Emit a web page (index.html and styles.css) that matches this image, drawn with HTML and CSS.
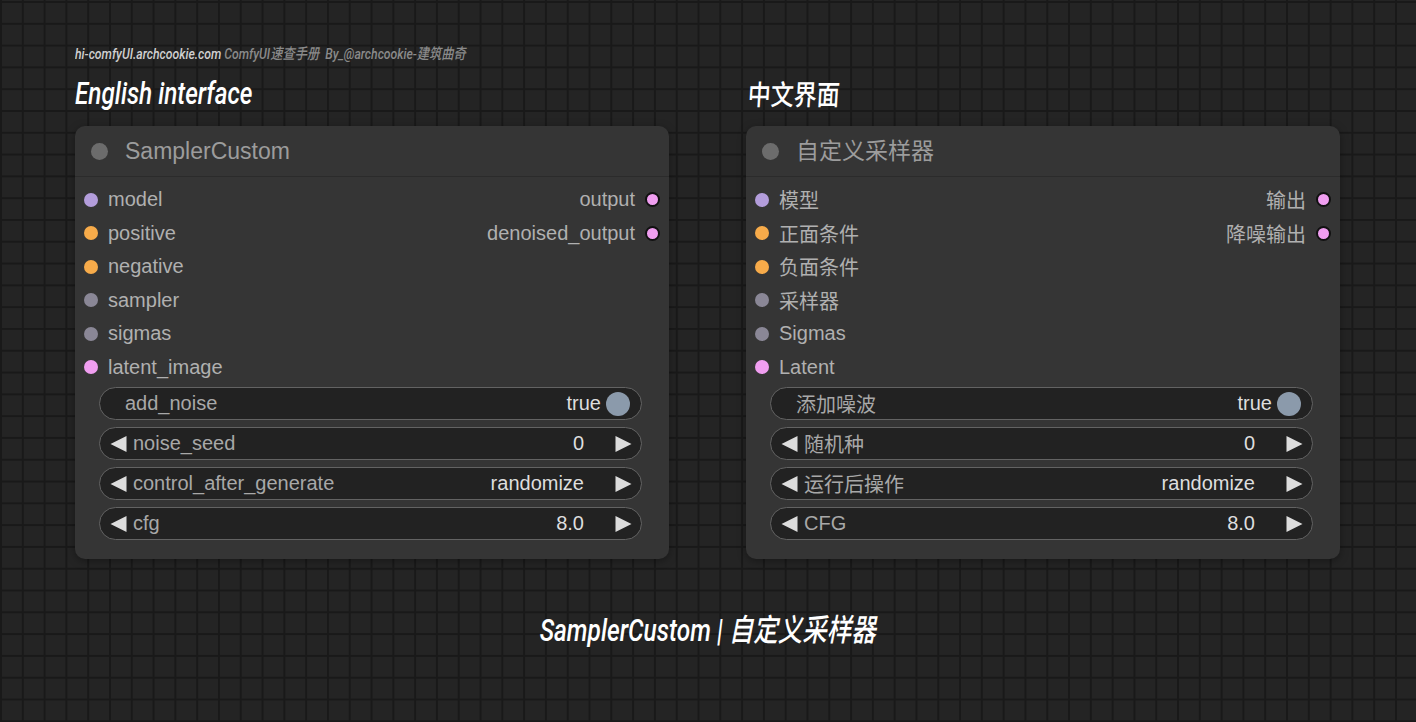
FILE: index.html
```html
<!DOCTYPE html>
<html lang="zh">
<head>
<meta charset="utf-8">
<title>SamplerCustom | 自定义采样器</title>
<link rel="stylesheet" href="styles.css">
</head>
<body>
<div class="page">
  <div class="credit"><span class="credit-inner"><span class="site">hi-comfyUI.archcookie.com</span> ComfyUI速查手册&nbsp; By_@archcookie-建筑曲奇</span></div>
  <div class="columns">
    <section class="col">
      <div class="col-head"><span class="head-en">English interface</span></div>
      <div class="node">
        <div class="node-title"><span class="title-dot"></span><span class="title-text">SamplerCustom</span></div>
        <div class="node-body">
          <div class="slots">
            <div class="inputs">
              <div class="slot"><span class="dot c-model"></span>model</div>
              <div class="slot"><span class="dot c-cond"></span>positive</div>
              <div class="slot"><span class="dot c-cond"></span>negative</div>
              <div class="slot"><span class="dot c-gray"></span>sampler</div>
              <div class="slot"><span class="dot c-gray"></span>sigmas</div>
              <div class="slot"><span class="dot c-latent"></span>latent_image</div>
            </div>
            <div class="outputs">
              <div class="slot out">output<span class="dot c-latent ring"></span></div>
              <div class="slot out">denoised_output<span class="dot c-latent ring"></span></div>
            </div>
          </div>
          <div class="widgets">
            <div class="widget toggle"><span class="w-label">add_noise</span><span class="w-value">true</span><span class="knob"></span></div>
            <div class="widget"><svg class="arrow" viewBox="0 0 16 16"><polygon points="16,0 16,16 0,8"/></svg><span class="w-label">noise_seed</span><span class="w-value">0</span><svg class="arrow r" viewBox="0 0 16 16"><polygon points="0,0 0,16 16,8"/></svg></div>
            <div class="widget"><svg class="arrow" viewBox="0 0 16 16"><polygon points="16,0 16,16 0,8"/></svg><span class="w-label">control_after_generate</span><span class="w-value">randomize</span><svg class="arrow r" viewBox="0 0 16 16"><polygon points="0,0 0,16 16,8"/></svg></div>
            <div class="widget"><svg class="arrow" viewBox="0 0 16 16"><polygon points="16,0 16,16 0,8"/></svg><span class="w-label">cfg</span><span class="w-value">8.0</span><svg class="arrow r" viewBox="0 0 16 16"><polygon points="0,0 0,16 16,8"/></svg></div>
          </div>
        </div>
      </div>
    </section>
    <section class="col">
      <div class="col-head"><span class="head-cn">中文界面</span></div>
      <div class="node">
        <div class="node-title"><span class="title-dot"></span><span class="title-text cn">自定义采样器</span></div>
        <div class="node-body">
          <div class="slots">
            <div class="inputs">
              <div class="slot"><span class="dot c-model"></span>模型</div>
              <div class="slot"><span class="dot c-cond"></span>正面条件</div>
              <div class="slot"><span class="dot c-cond"></span>负面条件</div>
              <div class="slot"><span class="dot c-gray"></span>采样器</div>
              <div class="slot"><span class="dot c-gray"></span>Sigmas</div>
              <div class="slot"><span class="dot c-latent"></span>Latent</div>
            </div>
            <div class="outputs">
              <div class="slot out">输出<span class="dot c-latent ring"></span></div>
              <div class="slot out">降噪输出<span class="dot c-latent ring"></span></div>
            </div>
          </div>
          <div class="widgets">
            <div class="widget toggle"><span class="w-label">添加噪波</span><span class="w-value">true</span><span class="knob"></span></div>
            <div class="widget"><svg class="arrow" viewBox="0 0 16 16"><polygon points="16,0 16,16 0,8"/></svg><span class="w-label">随机种</span><span class="w-value">0</span><svg class="arrow r" viewBox="0 0 16 16"><polygon points="0,0 0,16 16,8"/></svg></div>
            <div class="widget"><svg class="arrow" viewBox="0 0 16 16"><polygon points="16,0 16,16 0,8"/></svg><span class="w-label">运行后操作</span><span class="w-value">randomize</span><svg class="arrow r" viewBox="0 0 16 16"><polygon points="0,0 0,16 16,8"/></svg></div>
            <div class="widget"><svg class="arrow" viewBox="0 0 16 16"><polygon points="16,0 16,16 0,8"/></svg><span class="w-label">CFG</span><span class="w-value">8.0</span><svg class="arrow r" viewBox="0 0 16 16"><polygon points="0,0 0,16 16,8"/></svg></div>
          </div>
        </div>
      </div>
    </section>
  </div>
  <div class="footer-title"><span class="footer-inner">SamplerCustom | 自定义采样器</span></div>
</div>
</body>
</html>
```
FILE: styles.css
```css
html, body {
  margin: 0;
  padding: 0;
}
body {
  width: 1416px;
  height: 722px;
  overflow: hidden;
  background-color: #242424;
  background-image:
    linear-gradient(to right, #191919 0, #191919 2px, transparent 2px),
    linear-gradient(to bottom, #191919 0, #191919 2px, transparent 2px);
  background-size: 21.8px 21.8px;
  background-position: 0 1px;
  font-family: "Liberation Sans", "Noto Sans CJK SC", sans-serif;
}
.page {
  padding: 44px 0 0 75px;
}
.credit {
  height: 20px;
  line-height: 20px;
  font-family: Roboto, "Noto Sans CJK SC", sans-serif;
  font-style: italic;
  font-weight: 500;
  font-size: 15px;
  color: #8a8a8a;
  white-space: nowrap;
}
.credit-inner {
  display: inline-block;
  transform: scaleX(0.815);
  transform-origin: left center;
}
.credit .site {
  color: #d0d0d0;
}
.columns {
  display: flex;
  gap: 77px;
}
.col {
  width: 594px;
}
.col-head {
  height: 58px;
  padding-bottom: 4px;
  display: flex;
  align-items: center;
  white-space: nowrap;
}
.head-en {
  display: inline-block;
  font-family: Roboto, sans-serif;
  font-style: italic;
  font-weight: 500;
  font-size: 31px;
  color: #ffffff;
  transform: scaleX(0.785);
  transform-origin: left center;
}
.head-cn {
  display: inline-block;
  margin-left: 2px;
  font-family: "Noto Sans CJK SC", sans-serif;
  font-weight: 500;
  font-size: 28px;
  color: #ffffff;
  transform: scaleX(0.82) skewX(-4deg);
  transform-origin: left center;
}
.node {
  background: #353535;
  border-radius: 10px;
  box-shadow: 0 2px 8px rgba(0, 0, 0, 0.35);
  overflow: hidden;
}
.node-title {
  height: 50px;
  display: flex;
  align-items: center;
  padding-left: 16px;
  border-bottom: 1px solid #2b2b2b;
}
.title-dot {
  width: 17px;
  height: 17px;
  border-radius: 50%;
  background: #6c6c6c;
  margin-right: 17px;
  flex: none;
}
.title-text {
  font-size: 23px;
  color: #9c9c9c;
}
.title-text.cn {
  position: relative;
  top: -2px;
}
.node-body {
  padding: 6px 0 19px;
}
.slots {
  display: flex;
  justify-content: space-between;
}
.slot {
  height: 33.5px;
  display: flex;
  align-items: center;
  font-size: 20px;
  color: #b0b0b0;
  white-space: nowrap;
}
.inputs .slot {
  padding-left: 9px;
}
.outputs .slot {
  padding-right: 9px;
  justify-content: flex-end;
}
.dot {
  width: 14px;
  height: 14px;
  border-radius: 50%;
  margin-right: 10px;
  flex: none;
}
.out .dot {
  margin-right: 0;
  margin-left: 10px;
}
.ring {
  box-sizing: border-box;
  border: 2px solid #111111;
  width: 15px;
  height: 15px;
}
.c-model { background: #b39ddb; }
.c-cond { background: #f7ab4a; }
.c-gray { background: #8a8796; }
.c-latent { background: #f09ef0; }
.widgets {
  margin-top: 3px;
  padding: 0 27px 0 24px;
  display: flex;
  flex-direction: column;
  gap: 7px;
}
.widget {
  box-sizing: border-box;
  height: 33px;
  border: 1.5px solid #636363;
  border-radius: 17px;
  background: #222222;
  display: flex;
  align-items: center;
  padding: 0 9px 0 10px;
  font-size: 20px;
  white-space: nowrap;
}
.widget.toggle {
  padding: 0 11px 0 25px;
}
.arrow {
  width: 17px;
  height: 16px;
  fill: #dddddd;
  flex: none;
  margin-right: 6px;
}
.arrow.r {
  margin-right: 0;
  margin-left: 31px;
}
.w-label {
  flex: 1;
  color: #a8a8a8;
}
.w-value {
  color: #dedede;
}
.knob {
  width: 24px;
  height: 24px;
  border-radius: 50%;
  background: #8b9aab;
  margin-left: 5px;
  flex: none;
}
.footer-title {
  margin-top: 48px;
  margin-left: -75px;
  height: 40px;
  display: flex;
  align-items: center;
  justify-content: center;
  white-space: nowrap;
}
.footer-inner {
  display: inline-block;
  font-family: Roboto, "Noto Sans CJK SC", sans-serif;
  font-style: italic;
  font-weight: 500;
  font-size: 31px;
  color: #ffffff;
  transform: scaleX(0.79);
  transform-origin: center center;
}
```
